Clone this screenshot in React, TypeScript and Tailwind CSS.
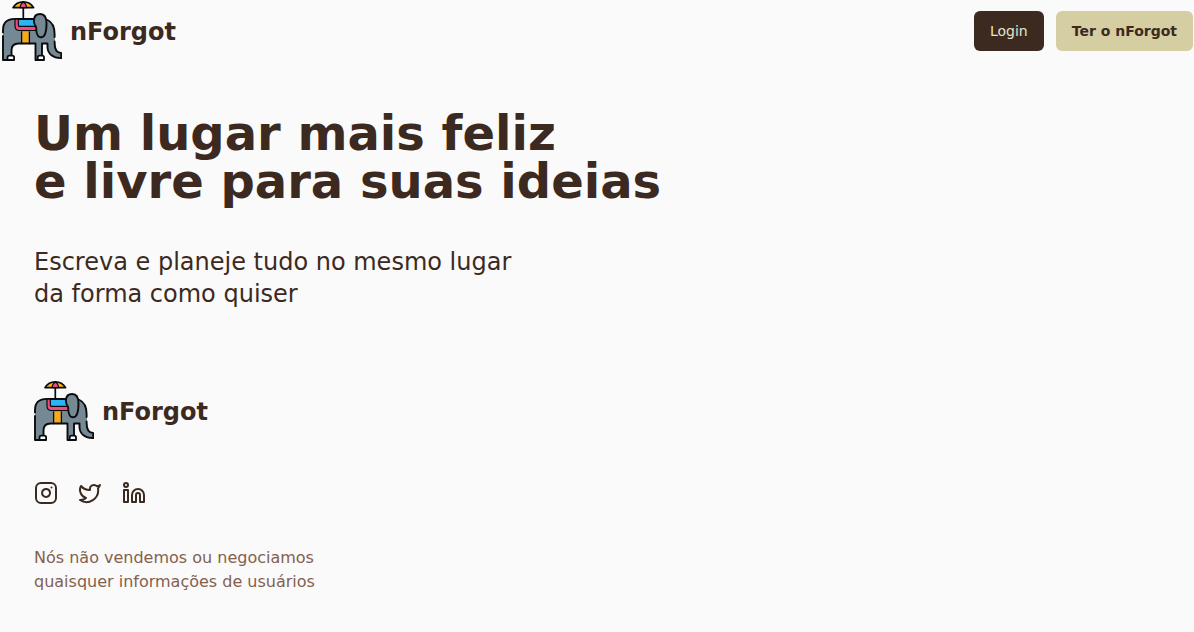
import { Instagram, Linkedin, Twitter } from "lucide-react";

function Elephant() {
  return (
    <svg
      className="size-[60px] shrink-0"
      viewBox="2 1 60 60"
      fill="none"
      stroke="#0b0b0d"
      strokeWidth="1.9"
      strokeLinecap="round"
      strokeLinejoin="round"
      aria-hidden="true"
    >
      <path
        d="M3 60V31Q3 19 15 19H36Q50 19 53 26Q55 30 55 42Q55.300 52 61.200 53V58Q51 58.500 48 49V43.500H42V60H35.500V43.500H18Q11.500 43.500 11.500 50V60Z"
        fill="#748993"
        stroke="none"
      />
      <path d="M21.700 32V43.500M29.300 32V43.500" strokeWidth="1.500" />
      <path d="M22.400 31.500H28.600V43H22.400Z" fill="#f9a817" stroke="none" />
      <path d="M18.500 19.500H35V27H18.500Z" fill="#2eb4f4" stroke="none" />
      <path d="M18.500 19.300H34M19 26.500H36" strokeWidth="1.400" />
      <path d="M16.700 19.500V25.500Q16.700 28.500 19.500 28.500H36" stroke="#ed4c83" strokeWidth="2.800" strokeLinecap="butt" />
      <path d="M18.300 19.500V25Q18.300 26.500 20 26.500H35.500M15 19.500V26Q15 30.500 19.500 30.500H36" strokeWidth="1.200" />
      <path d="M3 32.500V30Q3 18.900 15 18.900H35M3 36V60H11.500V50.500Q11.500 43.500 18.500 43.500H35.500V60H42V43.500H47.500V47.500C48 54 53 58.300 61.200 58.100V53C56.500 53 54.600 49.500 54.600 43V41.500M54.600 37V34C54.600 26.500 52 22 47.500 20" />
      <path
        d="M33.900 20.500C34 16.500 36.500 14 40.200 14C44.500 14 46.500 17.500 46.500 23.500C46.500 31.500 44.500 37.300 41 37.300C37.800 37.300 36.200 33 36.200 28.200Q36.200 26.500 35 25Q33.900 23.500 33.900 20.500Z"
        fill="#748993"
      />
      <path d="M7.500 60V57.500Q7.500 55.700 9.300 55.700H12.300Q14.100 55.700 14.100 57.500V60ZM37.700 60V57.500Q37.700 55.700 39.500 55.700H42.200Q44 55.700 44 57.500V60Z" fill="#fafafa" strokeWidth="1.800" />
      <path d="M23.300 7.500V18.500" strokeWidth="1.700" />
      <path d="M13 7.600Q16.500 1.900 23.300 1.900T33.600 7.600Z" fill="#fbb51a" strokeWidth="1.700" />
      <path d="M20 7.600Q20.500 3.500 23.300 2Q26.100 3.500 26.700 7.600Z" fill="#ed4c83" strokeWidth="1.100" />
    </svg>
  );
}

function Brand() {
  return (
    <div className="flex items-center gap-2">
      <Elephant />
      <span className="pt-0.5 text-2xl font-bold">nForgot</span>
    </div>
  );
}

export default function App() {
  return (
    <div className="min-h-screen bg-[#fafafa] text-[#3c2a21] [font-family:'DejaVu_Sans',sans-serif]">
      <header className="flex h-[62px] items-center justify-between pr-px pl-0.5">
        <Brand />
        <nav className="flex gap-3 text-sm">
          <button className="h-10 rounded-md bg-[#3c2a21] px-4 text-[#e5e5cb]">Login</button>
          <button className="h-10 rounded-md bg-[#d5cea3] px-4 font-bold">Ter o nForgot</button>
        </nav>
      </header>
      <main className="px-[34px] pt-[47px]">
        <h1 className="text-5xl leading-none font-bold">
          Um lugar mais feliz
          <br />e livre para suas ideias
        </h1>
        <p className="mt-[41px] text-2xl">
          Escreva e planeje tudo no mesmo lugar
          <br />
          da forma como quiser
        </p>
      </main>
      <footer className="px-[34px] pt-[71px]">
        <Brand />
        <div className="mt-10 flex gap-5">
          <Instagram size={24} />
          <Twitter size={24} />
          <Linkedin size={24} />
        </div>
        <p className="mt-[41px] text-base text-[#84604e]">
          Nós não vendemos ou negociamos
          <br />
          quaisquer informações de usuários
        </p>
      </footer>
    </div>
  );
}
